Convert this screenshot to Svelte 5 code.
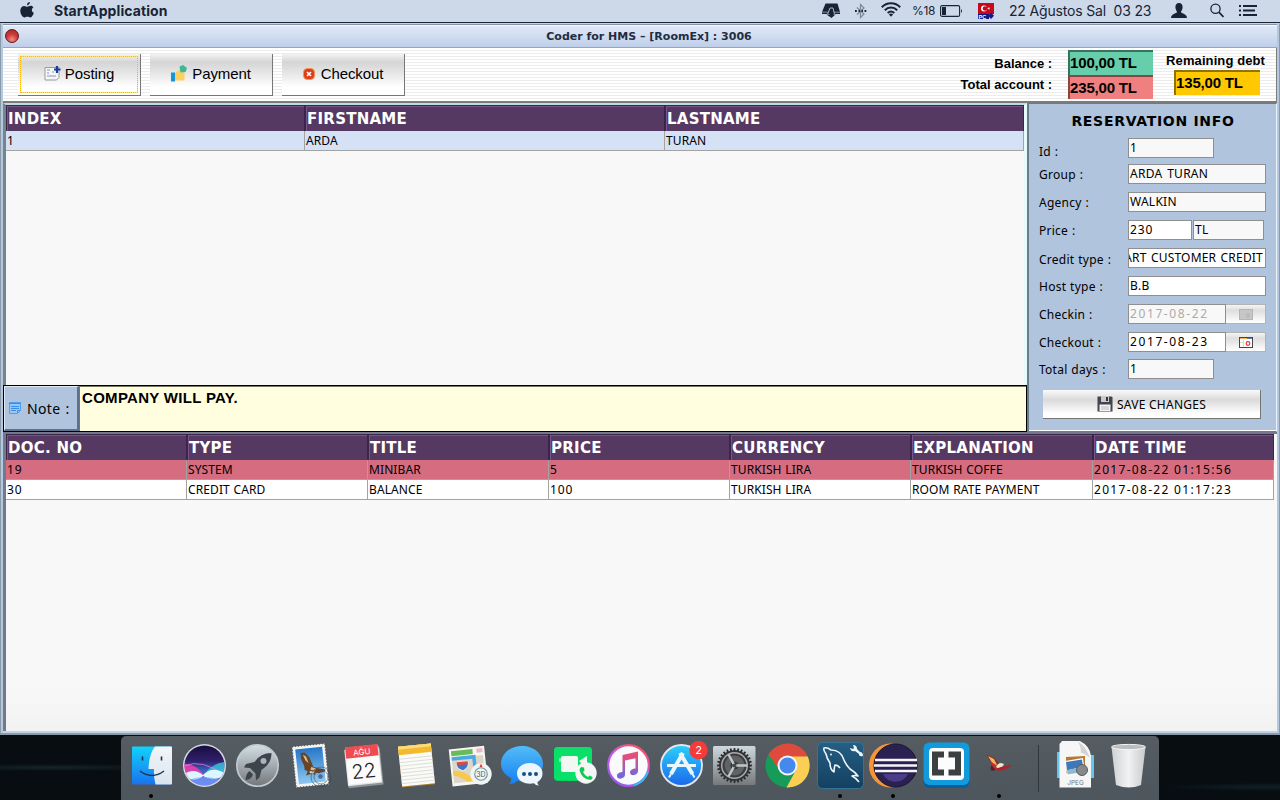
<script>
  const guests = {
    cols: '299px 360px 359px',
    head: ['INDEX', 'FIRSTNAME', 'LASTNAME'],
    rows: [{ tone: 'picked', cells: ['1', 'ARDA', 'TURAN'] }]
  };
  const postings = {
    cols: '181px 181px 181px 181px 181px 182px 181px',
    head: ['DOC. NO', 'TYPE', 'TITLE', 'PRICE', 'CURRENCY', 'EXPLANATION', 'DATE TIME'],
    rows: [
      { tone: 'charge', cells: ['19', 'SYSTEM', 'MINIBAR', '5', 'TURKISH LIRA', 'TURKISH COFFE', '2017-08-22 01:15:56'] },
      { tone: 'plain', cells: ['30', 'CREDIT CARD', 'BALANCE', '100', 'TURKISH LIRA', 'ROOM RATE PAYMENT', '2017-08-22 01:17:23'] }
    ]
  };
  const numeric = (t) => /^\d+$/.test(t);
  const dated = (t) => /^\d{4}-/.test(t);
  const teeth = Array.from({ length: 28 }, (_, i) => (i * 360) / 28);
</script>

{#snippet table(t)}
  <div class="table" style:--cols={t.cols}>
    <div class="tr head">
      {#each t.head as label}<div class="th">{label}</div>{/each}
    </div>
    {#each t.rows as row}
      <div class="tr {row.tone}">
        {#each row.cells as c}<div class="td" class:num={numeric(c)} class:dated={dated(c)}>{c}</div>{/each}
      </div>
    {/each}
  </div>
{/snippet}

<div class="screen">
  <header class="menubar">
    <svg class="apple" width="14" height="16" viewBox="0 0 14 16"><path d="M9.9 0C10 1.6 8.6 3.3 6.9 3.3 6.8 1.7 8.3.2 9.9 0zM13.4 5.4c-2.3 1.4-1.9 4.4.5 5.4-.6 1.8-2 4.6-3.6 4.6-1.1 0-1.5-.7-2.9-.7s-1.9.7-2.9.7C2.500 15.400.3 11.900.3 8.700c0-3.200 2-4.800 3.900-4.800 1.300 0 2.300.8 3.100.8.8 0 2-.9 3.500-.9 1 0 2 .6 2.600 1.600z" fill="#182336"/></svg>
    <b class="app">StartApplication</b>
    <div class="tray">
      <svg width="18" height="15" viewBox="0 0 18 15"><path d="M3.500.500h12L18 9v2H0V9z" fill="#182336"/><path d="M0 9.200h6M12 9.200h6" stroke="#cdd9e8" stroke-width=".6"/><path d="M5.500 11.500L8 5h3l1.500 6.500" fill="none" stroke="#cdd9e8" stroke-width=".8"/><path d="M8.500 6h2l1 5.500h2L9.500 15l-5-3.500h3z" fill="#182336"/></svg>
      <svg class="bt" width="13" height="16" viewBox="0 0 13 16"><path d="M3 4.500l7 6.500-3.500 3.500v-13L10 5l-7 6.500" fill="none" stroke="#7d8796" stroke-width="1.200"/><path d="M1 8h1.800M4.500 8h1.500M7.500 8h1.500M10.500 8h1.800" stroke="#182336" stroke-width="1.800"/></svg>
      <svg class="wifi" width="20" height="15" viewBox="0 0 20 15"><g fill="none" stroke="#182336" stroke-width="2"><path d="M.8 5.200c5-5.300 13.400-5.300 18.400 0"/><path d="M3.800 8.200c3.500-3.600 8.900-3.600 12.400 0"/><path d="M6.700 11c2-1.900 4.600-1.900 6.600 0"/></g><path d="M7.900 12.400q2.100-1.600 4.200 0L10 14.800z" fill="#182336"/></svg>
      <span class="pct">%18</span>
      <svg class="batt" width="23" height="12" viewBox="0 0 23 12"><rect x=".6" y=".6" width="19" height="10.800" rx="1.500" fill="none" stroke="#182336" stroke-width="1.100"/><rect x="2" y="2" width="4" height="8" fill="#182336"/><path d="M21 4q2 2 0 4z" fill="#182336"/></svg>
      <svg class="flag" width="16" height="16" viewBox="0 0 16 16"><rect width="16" height="11" fill="#c9061c"/><circle cx="6" cy="5.500" r="3" fill="#fff"/><circle cx="7" cy="5.500" r="2.300" fill="#c9061c"/><path d="M9 5.500l3-1-1.500 2.200V4l1.500 2.500z" fill="#fff"/><rect y="11" width="11" height="5" fill="#0d1580"/><text x=".5" y="15.600" class="pc">PC</text><path d="M13 9.500l3 3.300-3 3.200-3-3.200z" fill="#101b92"/></svg>
      <span class="date">22 Ağustos Sal&nbsp; 03 23</span>
      <svg class="user" width="16" height="15" viewBox="0 0 16 15"><path d="M8 0c2.500 0 3.600 1.800 3.600 4 0 2.500-1.200 3.500-1.600 5 0 1.500 6 1.500 6 6H0c0-4.500 6-4.500 6-6C5.600 7.500 4.400 6.500 4.400 4 4.400 1.800 5.500 0 8 0z" fill="#182336"/></svg>
      <svg class="find" width="14" height="15" viewBox="0 0 14 15"><circle cx="5.500" cy="5.700" r="4.600" fill="none" stroke="#182336" stroke-width="1.300"/><path d="M8.900 9.100l4.600 4.900" stroke="#182336" stroke-width="1.700"/></svg>
      <svg class="list" width="18" height="11" viewBox="0 0 18 11"><path d="M0 1h2M4 1h14M0 5.500h2M4 5.500h12M0 10h2M4 10h14" stroke="#182336" stroke-width="2"/></svg>
    </div>
  </header>

  <main class="window">
    <div class="titlebar"><i class="close"></i><span>Coder for HMS – [RoomEx] : 3006</span></div>

    <div class="toolbar">
      <button class="btn focus">
        <svg width="17" height="15" viewBox="0 0 17 15"><path d="M1 1.500h14v10l-2.500 2.500H1z" fill="#f6f6f6" stroke="#9a9a9a"/><path d="M3 4h3M3 7h2m3-1h2M3 10h9" stroke="#8298bd"/><path d="M13 0v7M10 3.500h6.500" stroke="#173f9d" stroke-width="2.200"/></svg>
        Posting
      </button>
      <button class="btn">
        <svg width="17" height="17" viewBox="0 0 17 17"><path d="M4 8l5-4 1 3h3.500v8.500H4z" fill="#fdd160"/><path d="M8.500 1.500L12 0l4 3-1.500 4-5 .5z" fill="#3eb797"/><path d="M0 7.500h4v9H0z" fill="#1694df"/></svg>
        Payment
      </button>
      <button class="btn checkout">
        <svg width="12" height="12" viewBox="0 0 12 12"><rect x=".5" y=".5" width="11" height="11" rx="4" fill="#df3b18" stroke="#ee9550"/><path d="M4 4l4 4M8 4l-4 4" stroke="#fff" stroke-width="1.700"/></svg>
        Checkout
      </button>
      <div class="sums">
        <div class="labels"><span>Balance :</span><span>Total account :</span></div>
        <div class="boxes"><div class="sum green">100,00 TL</div><div class="sum red">235,00 TL</div></div>
        <div class="debt"><span>Remaining debt</span><div class="sum gold">135,00 TL</div></div>
      </div>
    </div>

    <div class="middle">
      <section class="left">
        <div class="pane">{@render table(guests)}</div>
        <div class="note">
          <div class="notelabel">
            <svg width="12" height="12" viewBox="0 0 12 12"><path d="M.5.500h11v8l-3 3h-8z" fill="#9bc8f3" stroke="#4f9ff0"/><path d="M0 1.500h12M2 4.500h8M2 6.500h8M2 8.500h5M8.500 11V8.500H11" stroke="#3b8ceb" fill="none"/></svg>
            Note :
          </div>
          <div class="notetext">COMPANY WILL PAY.</div>
        </div>
      </section>

      <aside class="side">
        <h2>RESERVATION INFO</h2>
        <div class="field f1"><label>Id :</label><div class="in short num">1</div></div>
        <div class="field"><label>Group :</label><div class="in">ARDA TURAN</div></div>
        <div class="field"><label>Agency :</label><div class="in">WALKIN</div></div>
        <div class="field"><label>Price :</label><div class="in w price num">230</div><div class="in cur">TL</div></div>
        <div class="field low"><label>Credit type :</label><div class="in w clip"><span>ART CUSTOMER CREDIT</span></div></div>
        <div class="field"><label>Host type :</label><div class="in w">B.B</div></div>
        <div class="field"><label>Checkin :</label><div class="in day off dated">2017-08-22</div><div class="pick"><svg width="14" height="11" viewBox="0 0 14 11"><rect x=".5" y=".5" width="13" height="10" fill="#c6c6c6" stroke="#b5b5b5"/><circle cx="9" cy="6.500" r="1.500" fill="none" stroke="#b0b0b0"/></svg></div></div>
        <div class="field"><label>Checkout :</label><div class="in w day dated">2017-08-23</div><div class="pick"><svg width="14" height="11" viewBox="0 0 14 11"><rect x=".5" y=".5" width="13" height="10" fill="#fff" stroke="#47444e"/><path d="M1 1.500h7" stroke="#efb659"/><path d="M8 1.500h5" stroke="#5b7fc0"/><path d="M1 5.500h4M4.500 3v7" stroke="#dcd7c9"/><circle cx="9" cy="6.500" r="1.800" fill="none" stroke="#e4363c" stroke-width="1.200"/></svg></div></div>
        <div class="field last"><label>Total days :</label><div class="in short num">1</div></div>
        <div class="save">
          <svg width="16" height="16" viewBox="0 0 16 16"><path d="M.5.500h14l1 1v14H.5z" fill="#44444c"/><path d="M4 0h8v6H4z" fill="#c9c9cd"/><path d="M9 1h2v4H9z" fill="#33333a"/><path d="M2.500 8.500h11V15h-11z" fill="#f3f3f3"/><path d="M4 11h8M4 13h8" stroke="#bbb"/></svg>
          SAVE CHANGES
        </div>
      </aside>
    </div>

    <section class="lower">{@render table(postings)}</section>
  </main>

  <div class="desktop">
    <nav class="dock">
      <div class="app-icon run">
        <svg viewBox="0 0 53 64"><defs><linearGradient id="fa" x2="0" y2="1"><stop stop-color="#12d2fb"/><stop offset="1" stop-color="#1a72ee"/></linearGradient><linearGradient id="fb" x2="0" y2="1"><stop stop-color="#f3f5f8"/><stop offset="1" stop-color="#d9e4f0"/></linearGradient></defs><rect x="7" y="10.500" width="40" height="38" rx="1" fill="url(#fa)"/><path d="M30 10.500h16q1 0 1 1v36q0 1-1 1H30.500Q28.500 41 29 33h-5.500Q24 18 30 10.500z" fill="url(#fb)"/><path d="M17.500 20.500v4M36.500 20.500v4" stroke="#163253" stroke-width="1.600"/><path d="M15 35q12 9 24 0" fill="none" stroke="#163253" stroke-width="1.400"/></svg>
      </div>
      <div class="app-icon">
        <svg viewBox="0 0 53 64"><defs><linearGradient id="sa" x2="0" y2="1"><stop stop-color="#150c3a"/><stop offset=".4" stop-color="#31206c"/><stop offset=".62" stop-color="#3d62c4"/><stop offset="1" stop-color="#5b6be8"/></linearGradient><clipPath id="sc"><circle cx="26.500" cy="29.500" r="20"/></clipPath></defs><circle cx="26.500" cy="29.500" r="21.500" fill="#d9d9e0"/><g clip-path="url(#sc)"><rect x="5" y="8" width="43" height="43" fill="url(#sa)"/><path d="M4 28q12-2 22 11Q14 45 5 39z" fill="#ee3fae" opacity=".85"/><path d="M49 26q-13 0-23 12 10 6 23 1z" fill="#35d3dd" opacity=".75"/><path d="M6 30q18-8 42 10" fill="none" stroke="#ef8be6" opacity=".7"/><path d="M5 39q10-8 20 0 10-10 23-1-12 9-23 2-9 8-20-1z" fill="#dcf7ff"/><path d="M10 44q16-6 33 0l-8 8H17z" fill="#7fa5ff" opacity=".6"/></g></svg>
      </div>
      <div class="app-icon">
        <svg viewBox="0 0 53 64"><defs><linearGradient id="la" x2="0" y2="1"><stop stop-color="#d3e0e6"/><stop offset="1" stop-color="#74777b"/></linearGradient></defs><circle cx="26.500" cy="29.500" r="20.700" fill="url(#la)" stroke="#c2cbd0" stroke-width="1.600"/><path d="M40.500 17q-11 0-17 9l-8.500 2-2 3.500 6 .5 5.500 5.500.5 7 3.500-3 2-7.500q10-6 10-17z" fill="#3d444b"/><circle cx="32.500" cy="25" r="3" fill="#a9b4ba"/><path d="M18.500 35l3.500 3.500q-1.500 5-7.500 5.500.5-6.500 4-9z" fill="#3d444b"/></svg>
      </div>
      <div class="app-icon">
        <svg viewBox="0 0 53 64"><defs><linearGradient id="ma" x2="0" y2="1"><stop stop-color="#2477c8"/><stop offset="1" stop-color="#8fc7ee"/></linearGradient></defs><g transform="rotate(-6 26.500 29.500)"><rect x="10" y="9" width="33" height="41" fill="#f4f4f2"/><rect x="10" y="9" width="33" height="41" fill="none" stroke="#50585e" stroke-width="1.200" stroke-dasharray="1.200 1.800"/><rect x="13" y="12" width="27" height="35" fill="url(#ma)"/><path d="M18 16l4 0 4 5 2 6 1 4 5 2 7 2-1 2-6 1-4-1 1 2-5-1-5 1 2-4-3-2q1-4-1-7-2-5-1-10z" fill="#68442a"/><path d="M20 18l3 2 2 7-3-3zM27 31l5 2-2 2-4-1z" fill="#d9b98d"/><path d="M25 35l5 1-2 2-3-1z" fill="#f3e3c9"/></g><g fill="none" stroke="#39475a" opacity=".55"><circle cx="37" cy="41" r="10"/><circle cx="37" cy="41" r="7"/></g><circle cx="36.500" cy="40.500" r="2.300" fill="#264b78" opacity=".7"/></svg>
      </div>
      <div class="app-icon">
        <svg viewBox="0 0 53 64"><g transform="rotate(-6 26.500 29.500)"><path d="M9.500 14h35v36.500h-35z" fill="#8c9498"/><path d="M9 12h34.500v36.500H9z" fill="#e5e7e7"/><path d="M10 10h32.500v37H10z" fill="#fbfbfb"/><path d="M10 9.500h32.500v11.500H10z" fill="#ef4b50"/><text x="26.200" y="18.700" class="mon">AĞU</text><text x="26.200" y="42" class="dd">22</text></g></svg>
      </div>
      <div class="app-icon">
        <svg viewBox="0 0 53 64"><g transform="rotate(-6 26.500 29.500)"><path d="M10 9h33v41H10z" fill="#a57d27"/><path d="M10 9h33v40H10z" fill="#fafaf7"/><path d="M10 9h33v8.500H10z" fill="#f3ba2f"/><path d="M10 9h33v3H10z" fill="#ffdc74"/><path d="M10 21.500h33M10 25h33M10 28.500h33M10 32h33M10 35.500h33M10 39h33M10 42.500h33M10 46h33" stroke="#d7d7d4" stroke-width=".8"/></g></svg>
      </div>
      <div class="app-icon">
        <svg viewBox="0 0 53 64"><g transform="rotate(-6 26.500 29.500)"><path d="M7.500 11.500H43v37H7.500z" fill="#f6f5ef"/><path d="M9.500 13.500H31v5H9.500z" fill="#67bc56"/><path d="M35 13.500h6v4h-6z" fill="#efb6c5"/><path d="M9.500 20.500H41v25H9.500z" fill="#dcd6c8"/><path d="M9.500 19.500h24v26h-3.500V23H9.500z" fill="#49a9e4"/><path d="M9.500 33q14 1 20 12.500h-7Q17 39 9.500 38z" fill="#f7c84a"/><path d="M14 25h11q2 6-5.500 9Q12 31 14 25z" fill="#3c76c8" stroke="#fff" stroke-width=".7"/><path d="M14 25h11v3H14z" fill="#d84a44"/></g><circle cx="38" cy="38" r="10.700" fill="#f2f3f3"/><circle cx="38" cy="38" r="6.300" fill="none" stroke="#6596a5" stroke-width="1.100"/><path d="M38 27.500l1.500 3.500h-3z" fill="#df3a36"/><text x="38" y="40.700" class="threed">3D</text></svg>
      </div>
      <div class="app-icon">
        <svg viewBox="0 0 53 64"><defs><linearGradient id="me" x2="0" y2="1"><stop stop-color="#52bdf8"/><stop offset="1" stop-color="#187ff0"/></linearGradient></defs><path d="M26 10c12 0 21 8 21 18S38 45.500 26 45.500l-5-.5q-3 3.500-8 3 3-3 2-6C9 39 5 34 5 28c0-10 9-18 21-18z" fill="url(#me)"/><path d="M34 27c7 0 12.500 4.500 12.500 10.500 0 4-2 6.500-5 8.500q-.5 2 1.500 3.500-3.500 0-5-2.300L34 47.800c-7.500 0-13-4.300-13-10.300S26.500 27 34 27z" fill="#edf6fc"/><g fill="#184f81"><circle cx="28" cy="38" r="2"/><circle cx="34" cy="38" r="2"/><circle cx="40" cy="38" r="2"/></g></svg>
      </div>
      <div class="app-icon">
        <svg viewBox="0 0 53 64"><rect x="5" y="11" width="38" height="34" rx="4" fill="#04d65b"/><rect x="5" y="11" width="38" height="33" rx="4" fill="#08e069"/><rect x="12" y="20" width="17" height="16" rx="2" fill="#f1f8f2"/><path d="M30 25l8-5v13zM10.500 22v4l1 0v-4z" fill="#f1f8f2"/><circle cx="37" cy="37" r="10.700" fill="#f4f5f5"/><path d="M32.500 31l2.500.5.500 3-1.500 1.500q2 4 5 5l1.500-1.500 3 1.500q.5 2-2 3-9-1-11-10 .2-2.500 2-3z" fill="#10c954"/></svg>
      </div>
      <div class="app-icon">
        <svg viewBox="0 0 53 64"><defs><linearGradient id="it" x1=".8" x2=".2" y2="1"><stop stop-color="#fb4f5b"/><stop offset=".5" stop-color="#c457ec"/><stop offset="1" stop-color="#9a57f2"/></linearGradient><linearGradient id="in" x2="0" y2="1"><stop stop-color="#f84b68"/><stop offset="1" stop-color="#6769e6"/></linearGradient></defs><circle cx="26.500" cy="29.500" r="20.300" fill="#fafafc" stroke="url(#it)" stroke-width="2.200"/><path d="M46 35a20.300 20.300 0 0 1-14 14" fill="none" stroke="#38b7f2" stroke-width="2.200"/><path d="M20.500 19l15.500-3.500v19.300c0 5-8 6-8 1.700 0-3 3.500-4 5.500-4V22.300L23 24.500v13.800c0 5-8 6-8 1.700 0-3 3.500-4 5.500-4z" fill="url(#in)"/></svg>
      </div>
      <div class="app-icon">
        <svg viewBox="0 0 53 64"><defs><linearGradient id="as" x2="0" y2="1"><stop stop-color="#2bd0fb"/><stop offset="1" stop-color="#1b68ec"/></linearGradient></defs><circle cx="26.500" cy="29.500" r="20.500" fill="url(#as)" stroke="#e3e8ed" stroke-width="1.800"/><g stroke="#e9f7fd" fill="none"><path d="M12 29.500h29" stroke-width="3"/><path d="M28 17L16 38M25 17l12.500 21" stroke-width="4"/><path d="M16 38l-2 3.500M37.500 38l2 3.500" stroke-width="2"/></g><circle cx="43.500" cy="14" r="9.200" fill="#f23c3c"/><text x="43.500" y="18" class="badge">2</text></svg>
      </div>
      <div class="app-icon">
        <svg viewBox="0 0 53 64"><defs><linearGradient id="sy" x2="0" y2="1"><stop stop-color="#ccd9df"/><stop offset="1" stop-color="#77797c"/></linearGradient></defs><rect x="5" y="10" width="42.500" height="39" rx="1.500" fill="url(#sy)"/><circle cx="26.500" cy="29.500" r="15.500" fill="#3b3d3f"/><g stroke="#2c2e30" stroke-width="1.800">{#each teeth as a}<path d="M26.500 12v4" transform="rotate({a} 26.500 29.500)"/>{/each}</g><circle cx="26.500" cy="29.500" r="12.800" fill="none" stroke="#aaa" stroke-width="1.500"/><circle cx="26.500" cy="29.500" r="10" fill="#5f6365"/><circle cx="26.500" cy="29.500" r="4" fill="#36383a"/><path d="M26.500 29.500H39M26.500 29.500l-6-11M26.500 29.500l-6 11" stroke="#c3c6c7" stroke-width="2.500"/><circle cx="26.500" cy="29.500" r="2" fill="#484a4c"/></svg>
      </div>
      <div class="app-icon">
        <svg viewBox="0 0 53 64"><circle cx="26.500" cy="29.500" r="22" fill="#169b58"/><path d="M7.500 18.500A22 22 0 0 1 46.800 21H26.500l-8 13z" fill="#de4b3d"/><path d="M46.700 20.500A22 22 0 0 1 25.500 51.500L34.500 35q3-8-4-14.500z" fill="#fccf54"/><circle cx="26.500" cy="29.500" r="10" fill="#f4f5f5"/><circle cx="26.500" cy="29.500" r="8" fill="#4788ee"/></svg>
      </div>
      <div class="app-icon run">
        <svg viewBox="0 0 53 64"><defs><linearGradient id="my" x2="0" y2="1"><stop stop-color="#245f83"/><stop offset="1" stop-color="#144061"/></linearGradient></defs><rect x="3.500" y="6.500" width="46" height="46" rx="5" fill="url(#my)" stroke="#357397"/><path d="M45 46q-3-4-7-6 3-1 6 0-3-4-8-7-4-4-6-9-3-10-13-10-4-3-7-2-1 2 2 6 1 5 4 9 0 7 4 9 0-4 1-7 3 0 5 3" fill="none" stroke="#eef6fa" stroke-width="1.600" stroke-linejoin="round"/><circle cx="17" cy="18.500" r=".9" fill="#fff"/><path d="M39 9q4 0 4 4l3 3q3 0 3 4-3 1-4-1l0-1-4-3q-4 1-5-3l3 1 1-1z" fill="#eef3f6"/></svg>
      </div>
      <div class="app-icon run">
        <svg viewBox="0 0 53 64"><ellipse cx="23" cy="29.500" rx="21" ry="22" fill="#f79435"/><circle cx="28.500" cy="29.500" r="21.500" fill="#2b2150" stroke="#19142f"/><path d="M16 38a14 14 0 0 0 25 0z" fill="#4b3b88"/><path d="M8 24h42M7 29.500h43M8 35h42" stroke="#f5f5fa" stroke-width="2.600"/></svg>
      </div>
      <div class="app-icon">
        <svg viewBox="0 0 53 64"><rect x="3.500" y="9" width="46" height="43" rx="6" fill="#045f9c"/><rect x="3.500" y="6.500" width="46" height="42.500" rx="6" fill="#119adc"/><rect x="9" y="12" width="35" height="32" rx="4" fill="#fcfcfc"/><path d="M12 15.500h12v6h-6v12h6v6H12zM41 15.500H28.500v6H35v12h-6.500v6H41z" fill="#3c3f41"/></svg>
      </div>
      <div class="app-icon run">
        <svg viewBox="0 0 53 64"><path d="M13.500 18.500l8 3.500 3.500 4 1 5-4 1-4-5z" fill="#8f2a2b"/><path d="M15 20l6 3 3 6-3 1z" fill="#f1b95b"/><path d="M17 25l6 4 1 4-3 0z" fill="#c12d31"/><path d="M18.500 29l4 5-4 1-1-3z" fill="#571f25"/><path d="M23 31q2-4 5-4l3 1-1 2-4 3z" fill="#f4e2ca"/><path d="M22 33l6-2 11-2-4 3-8 3z" fill="#b3202b"/></svg>
      </div>
      <i class="sep"></i>
      <div class="app-icon">
        <svg viewBox="0 0 53 64"><path d="M8 16h11l2 3h24v23H8z" fill="#65c5ed"/><path d="M13 5h18q10 5 11 15v31.500H10.500V8q1-1 2.500-3z" fill="#f6f6f6"/><path d="M28 5q9 5 13 17-6-5-9-5 0-8-4-12z" fill="#d3d3d3"/><path d="M17 21l19-1v17H17z" fill="#b87832"/><path d="M16 25l18-3 2 15-18 3z" fill="#fff"/><path d="M17 26l16-2.500 1 7-16 4z" fill="#3d78bc"/><path d="M18 34l16-3 .5 5-16 2.500z" fill="#8fb9cf"/><circle cx="33" cy="34" r="5.500" fill="#858989" stroke="#595d60"/><text x="26.500" y="49" class="jpeg">JPEG</text></svg>
      </div>
      <div class="app-icon">
        <svg viewBox="0 0 53 64"><defs><linearGradient id="tr"><stop stop-color="#cdd0d3"/><stop offset=".5" stop-color="#f2f2f3"/><stop offset="1" stop-color="#c7cacd"/></linearGradient></defs><path d="M9.500 11h34l-4.500 38q-12 5-25 0z" fill="url(#tr)"/><ellipse cx="26.500" cy="11" rx="17" ry="2.600" fill="#b9bdc1" stroke="#f4f4f4"/></svg>
      </div>
    </nav>
  </div>
</div>

<style>
  :global(body) { margin: 0; overflow: hidden; }
  .screen { width: 1280px; height: 800px; display: flex; flex-direction: column; overflow: hidden; background: #0a1116; color: #000; font-family: "Noto Sans", sans-serif; }
  .screen * { box-sizing: border-box; }
  svg { flex: none; display: block; }

  .menubar { height: 23px; flex: none; display: flex; align-items: center; background: #cdd9e8; border-bottom: 1px solid #16253c; color: #182336; font-family: Inter, sans-serif; padding: 0 23px 1px 20px; }
  .apple { margin-top: -1px; }
  .app { margin-left: 20px; font-size: 14px; font-weight: 700; letter-spacing: .1px; }
  .tray { margin-left: auto; display: flex; align-items: center; }
  .bt { margin-left: 14px; }
  .wifi { margin-left: 14px; margin-top: -2px; }
  .pct { margin-left: 11px; font-size: 12px; width: 24px; letter-spacing: -.3px; }
  .batt { margin-left: 4px; }
  .flag { margin-left: 15px; }
  .pc { font: 700 5.500px "Liberation Sans", sans-serif; fill: #fff; }
  .date { margin-left: 15px; font-size: 14px; width: 143px; white-space: nowrap; letter-spacing: -.17px; }
  .user { margin-left: 19px; }
  .find { margin-left: 23px; }
  .list { margin-left: 15px; }

  .window { height: 712px; flex: none; display: flex; flex-direction: column; border: 1px solid #8b9aa9; border-top-color: #c6d2df; border-width: 1px 1px 2px; background: #f8f8f8; box-shadow: inset 2px 0 #b4c8df, inset -2px 0 #b4c8df, inset 0 1px #8794a4, inset 0 -2px #c3d1e7, inset 0 -4px #e1dff4; padding: 0 2px 2px; }
  .titlebar { height: 22px; flex: none; margin: 2px 0 0; display: flex; align-items: center; background: linear-gradient(#e1e9f7, #bfcfea); border-bottom: 1px solid #98a6b8; position: relative; justify-content: center; font: 700 11px "DejaVu Sans", sans-serif; color: #1e2d42; padding: 0 0 1px 18px; }
  .close { position: absolute; left: 2px; top: 3px; width: 14px; height: 14px; border-radius: 50%; border: 1px solid #6e1515; background: radial-gradient(circle at 50% 80%, #f08e80, #c73a37 50%, #a92727); }
  .toolbar { height: 55px; flex: none; display: flex; align-items: flex-start; padding: 6px 11px 0 15px; gap: 9px; background: repeating-linear-gradient(#fff 0 2px, #ececec 2px 3px); border: solid #7b7b7b; border-width: 0 1px 2px 0; }
  .btn { width: 123px; height: 42px; margin: 0; padding: 0 0 2px; border: solid #777; border-width: 0 1px 1px 0; background: linear-gradient(#f2f2f2, #d5d5d5 20%, #e7e7e7 48%, #fff 80%); color: #000; font: 15px "Liberation Sans", sans-serif; letter-spacing: -.1px; display: flex; align-items: center; justify-content: center; gap: 4px; position: relative; }
  .btn.checkout { gap: 6px; }
  .btn.focus::before { content: ""; position: absolute; inset: 2px; border: 1px solid #ffe27a; }
  .btn.focus::after { content: ""; position: absolute; inset: 2px; border: 1px dotted #ffb900; }
  .sums { margin-left: auto; display: flex; font: 700 13px "Liberation Sans", sans-serif; letter-spacing: 0; margin-top: -4px; }
  .labels { display: flex; flex-direction: column; text-align: right; padding-top: 6px; gap: 6px; line-height: 15px; margin-right: 16px; }
  .sum { width: 85px; height: 25px; border: solid rgba(0,0,0,.45); border-width: 2px 0 0 2px; font-size: 15px; line-height: 22px; letter-spacing: -.2px; padding-left: 0; }
  .green { background: #66ceaa; } .red { background: #f08080; height: 24px; } .gold { background: #ffc800; margin-left: 8px; border-color: #927200; }
  .debt { margin-left: 13px; line-height: 15px; padding-top: 3px; letter-spacing: .1px; }
  .debt .gold { margin-top: 2px; width: 86px; }

  .middle { height: 329px; flex: none; display: flex; }
  .left { width: 1024px; display: flex; flex-direction: column; }
  .pane { flex: 1; border-left: 3px solid #73858e; border-right: 3px solid #e6fafa; border-top: 2px solid #b9dcdc; }
  .table { width: max-content; }
  .tr { display: grid; grid-template-columns: var(--cols); height: 20px; }
  .tr.head { height: 26px; }
  .th { background: #553963; border: 1px solid #3c2648; box-shadow: inset 1px 1px #79538b; color: #fff; font: 700 15px/27px "DejaVu Sans", sans-serif; letter-spacing: .25px; padding-left: 1px; border-bottom-color: #6c4a80; }
  .td { font-size: 12px; line-height: 19px; border: solid #a3a3a3; border-width: 0 1px 1px 0; padding-left: 1px; white-space: nowrap; overflow: hidden; letter-spacing: .1px; word-spacing: .5px; }
  .num { letter-spacing: .9px; }
  .dated { letter-spacing: 1.300px; word-spacing: 0; }
  .picked .td { background: #d5e1f5; }
  .charge .td { background: #d66c80; }
  .plain .td { background: #fff; }
  .note { height: 47px; flex: none; display: flex; border: 1px solid #000; }
  .notelabel { width: 75px; display: flex; align-items: center; gap: 6px; background: #b0c4de; border: solid #5d708c; border-width: 1px 2px 2px 1px; border-top-color: #e1e9f4; border-left-color: #e1e9f4; padding-left: 4px; font-size: 14px; letter-spacing: .35px; word-spacing: 1px; white-space: nowrap; }
  .notetext { flex: 1; background: #ffffdf; border-top: 1px solid #77775f; border-left: 1px solid #77775f; font: 700 15px/21px "Liberation Sans", sans-serif; letter-spacing: .3px; padding-left: 2px; }

  .side { flex: 1; background: #b0c4de; border: solid #6a7c8b; border-width: 1px 1px 1px 2px; border-right-color: #edf3fb; box-shadow: inset 0 -1px #fff; padding: 9px 9px 0 10px; display: flex; flex-direction: column; }
  h2 { margin: 0 0 8px; font: 700 14px/17px "DejaVu Sans", sans-serif; text-align: center; letter-spacing: .7px; }
  .field { height: 20px; flex: none; display: flex; margin-bottom: 8px; font-size: 12px; line-height: 17px; }
  .field label { width: 89px; padding-top: 2px; letter-spacing: .25px; word-spacing: .5px; }
  .field.f1 { margin-bottom: 6px; } .f1 label { padding-top: 5px; }
  .field.low label { padding-top: 3px; }
  .in { width: 138px; border: 1px solid #8f8f8f; background: #f8f8f8; padding-left: 1px; white-space: nowrap; overflow: hidden; letter-spacing: .25px; word-spacing: 1.500px; }
  .in.num { letter-spacing: .9px; }
  .in.dated { letter-spacing: 1.600px; }
  .w { background: #fff; }
  .short { width: 86px; }
  .price { width: 64px; margin-right: 1px; }
  .cur { width: 71px; }
  .day { width: 98px; }
  .off { color: #aaa; }
  .in.clip { display: flex; justify-content: flex-end; padding: 0 2px 0 1px; letter-spacing: .2px; word-spacing: 1px; }
  .pick { width: 40px; border: 1px solid #b3b3b3; border-left: 0; background: linear-gradient(#f4f4f4, #dedede 30%, #fff); display: flex; align-items: center; justify-content: center; }
  .last { margin-top: -1px; }
  .save { margin: 3px 6px 0 4px; width: 218px; height: 29px; flex: none; border: solid #757575; border-width: 0 1px 1px 0; background: linear-gradient(#fafafa, #dadada 35%, #fff 85%); display: flex; align-items: center; justify-content: center; gap: 4px; font-size: 12px; letter-spacing: .25px; }

  .lower { flex: 1; border: solid #73788e; border-width: 2px 0 0 3px; min-height: 0; background: linear-gradient(#f8f8f8 85%, #f2f2f2); }

  .desktop { flex: 1; display: flex; justify-content: center; background: radial-gradient(ellipse at 4% 50%, #14242a, transparent 8%), radial-gradient(ellipse at 99% 80%, #102026, transparent 6%), #070d11; }
  .dock { width: 1038px; margin-top: 1px; background: linear-gradient(#555c62, #4d565d); border-radius: 5px 5px 0 0; display: flex; padding-left: 3.500px; }
  .app-icon { width: 53px; height: 64px; flex: none; position: relative; }
  .app-icon svg { width: 53px; height: 64px; }
  .run::after { content: ""; position: absolute; left: 24.500px; bottom: 2px; width: 4px; height: 4px; border-radius: 50%; background: #000; }
  .sep { width: 1px; height: 47px; background: #30363b; margin: 9px 10px 0 12px; }
  .mon, .dd, .threed, .badge, .jpeg { font-family: Inter, sans-serif; text-anchor: middle; }
  .mon { font-size: 8px; fill: #fff; }
  .dd { font-size: 20px; font-weight: 300; fill: #222; }
  .threed { font-size: 7px; fill: #555; }
  .badge { font-size: 11px; fill: #fff; }
  .jpeg { font-size: 6.500px; fill: #777; }
</style>
